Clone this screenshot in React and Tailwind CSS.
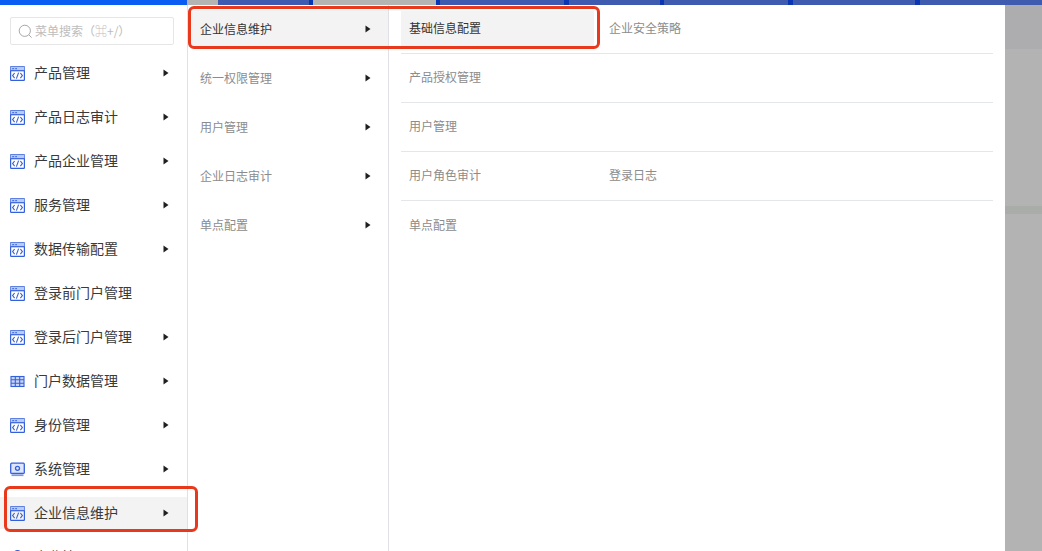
const CJK = "font-['Noto_Sans_CJK_SC','Liberation_Sans',sans-serif]";

function CodeIcon() {
  return (
    <svg width="15" height="15" viewBox="0 0 15 15" fill="none" stroke="#3560dc" strokeWidth="1.2" className="shrink-0">
      <rect x="0.6" y="0.7" width="13.8" height="13.6" rx="0.6" />
      <rect x="0.6" y="0.7" width="13.8" height="4" fill="#b9caf5" stroke="none" />
      <path d="M0.6 4.7H14.4" />
      <path d="M2.2 2.7H4.2M5.2 2.7H7" strokeWidth="1" />
      <path d="M4.6 7 2.6 9.6l2 2.6M10.4 7l2 2.6-2 2.6M8.6 6.6 6.4 12.6" strokeWidth="1.1" />
    </svg>
  );
}

function TableIcon() {
  return (
    <svg width="15" height="15" viewBox="0 0 15 15" fill="none" stroke="#3560dc" strokeWidth="1.1" className="shrink-0">
      <rect x="1" y="2.5" width="13" height="10" fill="#c9d6f8" />
      <path d="M1 5.8H14M1 9.2H14M5.3 2.5V12.5M9.7 2.5V12.5" />
    </svg>
  );
}

function SystemIcon() {
  return (
    <svg width="15" height="15" viewBox="0 0 15 15" fill="none" className="shrink-0">
      <rect x="0.7" y="1.2" width="13.6" height="10.2" rx="1" fill="#dde6fb" stroke="#3560dc" strokeWidth="1.3" />
      <path d="M1.5 13.2H13.5" stroke="#7d98e6" strokeWidth="1.8" />
      <circle cx="7.5" cy="6.3" r="2" stroke="#3560dc" strokeWidth="1.3" />
    </svg>
  );
}

function UserIcon() {
  return (
    <svg width="15" height="15" viewBox="0 0 15 15" fill="none" className="shrink-0">
      <circle cx="7.5" cy="3.5" r="3.5" fill="#2f5bdc" />
      <path d="M1.5 14c0-3.4 2.6-5.5 6-5.5s6 2.1 6 5.5Z" fill="#7d98e6" />
    </svg>
  );
}

function Arrow() {
  return (
    <svg width="6" height="8" viewBox="0 0 6 8" className="shrink-0">
      <path d="M0.5 0.5 5.5 4 0.5 7.5Z" fill="#1f1f1f" />
    </svg>
  );
}

const SIDE = [
  ["产品管理", "code", true],
  ["产品日志审计", "code", true],
  ["产品企业管理", "code", true],
  ["服务管理", "code", true],
  ["数据传输配置", "code", true],
  ["登录前门户管理", "code", false],
  ["登录后门户管理", "code", true],
  ["门户数据管理", "table", true],
  ["身份管理", "code", true],
  ["系统管理", "system", true],
  ["企业信息维护", "code", true, true],
  ["企业管理", "user", true],
];

const MID = ["企业信息维护", "统一权限管理", "用户管理", "企业日志审计", "单点配置"];

const RIGHT = [
  ["基础信息配置", "企业安全策略"],
  ["产品授权管理"],
  ["用户管理"],
  ["用户角色审计", "登录日志"],
  ["单点配置"],
];

const STRIP = [
  ["w-[187px]", "bg-[#0b5cf2]"],
  ["w-[31px]", "bg-[#b4b4b2]"],
  ["w-[91px]", "bg-[#3f5bb0]"],
  ["w-[4px]", "bg-[#0a36b4]"],
  ["w-[123px]", "bg-[#b4b4b2]"],
  ["w-[4px]", "bg-[#0a36b4]"],
  ["w-[124px]", "bg-[#3f5bb0]"],
  ["w-[5px]", "bg-[#0a36b4]"],
  ["w-[91px]", "bg-[#3f5bb0]"],
  ["w-[4px]", "bg-[#0a36b4]"],
  ["w-[124px]", "bg-[#3f5bb0]"],
  ["w-[5px]", "bg-[#0a36b4]"],
  ["w-[122px]", "bg-[#3f5bb0]"],
  ["w-[5px]", "bg-[#0a36b4]"],
  ["flex-1", "bg-[#3f5bb0]"],
];

function SideIcon({ kind }) {
  if (kind === "table") return <TableIcon />;
  if (kind === "system") return <SystemIcon />;
  if (kind === "user") return <UserIcon />;
  return <CodeIcon />;
}

export default function App() {
  return (
    <div className={`relative flex h-[551px] w-[1042px] flex-col overflow-hidden bg-white ${CJK}`}>
      <div className="flex h-[5px] shrink-0">
        {STRIP.map(([w, c], i) => (
          <div key={i} className={`${w} ${c}`} />
        ))}
      </div>

      <div className="flex min-h-0 flex-1">
        <aside className="w-[188px] shrink-0 overflow-hidden border-r border-[#dfe1e6]">
          <div className="mx-[10px] mt-[12px] flex h-[28px] w-[164px] items-center gap-[2px] rounded-[2px] border border-[#e6e6e6] pl-[7px]">
            <svg width="15" height="15" viewBox="0 0 15 15" fill="none" stroke="#a8a8a8" strokeWidth="1" className="shrink-0">
              <circle cx="6.8" cy="6.8" r="5.6" />
              <path d="M11 11l2.6 2.6" />
            </svg>
            <span className="text-[12px] leading-none whitespace-nowrap text-[#bdbdbd]">菜单搜索（⌘+/）</span>
          </div>
          <ul className="mt-[6px]">
            {SIDE.map(([label, icon, arrow, active]) => (
              <li key={label} className="flex h-[44px] items-center">
                <div className={`flex h-[32px] w-full items-center pr-[18px] pl-[10px] ${active ? "bg-[#f3f3f3]" : ""}`}>
                  <SideIcon kind={icon} />
                  <span className="ml-[9px] flex-1 pb-[2px] text-[14px] whitespace-nowrap text-[#3a3a3a]">{label}</span>
                  {arrow && <Arrow />}
                </div>
              </li>
            ))}
          </ul>
        </aside>

        <nav className="w-[201px] shrink-0 border-r border-[#dfe1e6]">
          {MID.map((label, i) => (
            <div key={label} className="flex h-[49px] items-center pb-[2px]">
              <div className={`flex h-[37px] w-full items-center pr-[17px] pl-[12px] ${i === 0 ? "bg-[#f3f3f3]" : ""}`}>
                <span className={`flex-1 text-[12px] ${i === 0 ? "text-[#333333]" : "text-[#8c8c8c]"}`}>{label}</span>
                <Arrow />
              </div>
            </div>
          ))}
        </nav>

        <section className="flex-1 px-[12px]">
          {RIGHT.map((cells, i) => (
            <div key={i} className={`flex h-[49px] items-center gap-[7px] pb-[2px] ${i < 4 ? "border-b border-[#e4e6ea]" : ""}`}>
              {cells.map((cell, j) => (
                <div
                  key={cell}
                  className={`flex h-[35px] w-[193px] items-center pl-[8px] text-[12px] ${
                    i === 0 && j === 0 ? "bg-[#f3f3f3] text-[#333333]" : "text-[#8c8c8c]"
                  }`}
                >
                  {cell}
                </div>
              ))}
            </div>
          ))}
        </section>

        <div className="flex w-[37px] shrink-0 flex-col bg-[#b3b3b3]">
          <div className="h-[44px] bg-[#adadaf]" />
          <div className="mt-[157px] h-[8px] bg-[#aaacaa]" />
        </div>
      </div>

      <div className="pointer-events-none absolute top-[6px] left-[188px] h-[43px] w-[412px] rounded-[6px] border-[3px] border-[#e8391c]" />
      <div className="pointer-events-none absolute top-[486px] left-[4px] h-[46px] w-[194px] rounded-[6px] border-[3px] border-[#e8391c]" />
    </div>
  );
}
